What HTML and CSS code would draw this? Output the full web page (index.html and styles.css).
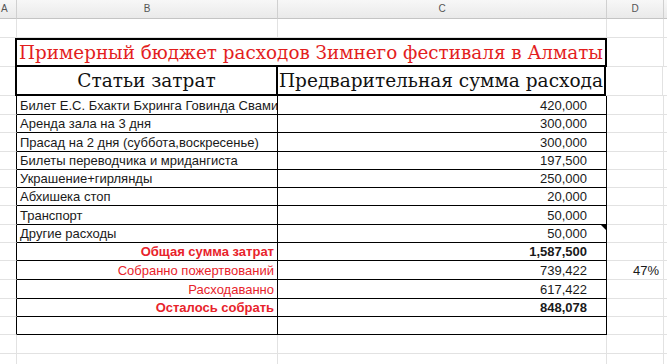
FILE: index.html
```html
<!DOCTYPE html>
<html lang="ru">
<head>
<meta charset="utf-8">
<title>Бюджет</title>
<link rel="stylesheet" href="styles.css">
</head>
<body>
<div class="sheet">
  <div class="row colhdr">
    <div class="cell ca hl">A</div>
    <div class="cell cb">B</div>
    <div class="cell cc">C</div>
    <div class="cell cd">D</div>
    <div class="cell ce"></div>
  </div>
  <div class="row h19">
    <div class="cell ca"></div>
    <div class="cell cb"></div>
    <div class="cell cc"></div>
    <div class="cell cd"></div>
    <div class="cell ce"></div>
  </div>
  <div class="row trow">
    <div class="cell ca2"></div>
    <div class="cell title">Примерный бюджет расходов Зимнего фестиваля в Алматы</div>
    <div class="cell cd"></div>
    <div class="cell ce"></div>
  </div>
  <div class="row hrow">
    <div class="cell ca2"></div>
    <div class="cell hb">Статьи затрат</div>
    <div class="cell hc">Предварительная сумма расхода</div>
    <div class="cell cd"></div>
    <div class="cell ce"></div>
  </div>
  <div class="row h19 t">
    <div class="cell ca"></div><div class="cell cb">Билет Е.С. Бхакти Бхринга Говинда Свами</div><div class="cell cc num">420,000</div><div class="cell cd"></div><div class="cell ce"></div>
  </div>
  <div class="row h18 t">
    <div class="cell ca"></div><div class="cell cb">Аренда зала на 3 дня</div><div class="cell cc num">300,000</div><div class="cell cd"></div><div class="cell ce"></div>
  </div>
  <div class="row h19 t">
    <div class="cell ca"></div><div class="cell cb">Прасад на 2 дня (суббота,воскресенье)</div><div class="cell cc num">300,000</div><div class="cell cd"></div><div class="cell ce"></div>
  </div>
  <div class="row h18 t">
    <div class="cell ca"></div><div class="cell cb">Билеты переводчика и мридангиста</div><div class="cell cc num">197,500</div><div class="cell cd"></div><div class="cell ce"></div>
  </div>
  <div class="row h18 t">
    <div class="cell ca"></div><div class="cell cb">Украшение+гирлянды</div><div class="cell cc num">250,000</div><div class="cell cd"></div><div class="cell ce"></div>
  </div>
  <div class="row h18 t">
    <div class="cell ca"></div><div class="cell cb">Абхишека стоп</div><div class="cell cc num">20,000</div><div class="cell cd"></div><div class="cell ce"></div>
  </div>
  <div class="row h19 t">
    <div class="cell ca"></div><div class="cell cb">Транспорт</div><div class="cell cc num">50,000</div><div class="cell cd"></div><div class="cell ce"></div>
  </div>
  <div class="row h18 t">
    <div class="cell ca"></div><div class="cell cb">Другие расходы</div><div class="cell cc num note">50,000</div><div class="cell cd"></div><div class="cell ce"></div>
  </div>
  <div class="row h18 t">
    <div class="cell ca"></div><div class="cell cb lbl bold">Общая сумма затрат</div><div class="cell cc num bold">1,587,500</div><div class="cell cd"></div><div class="cell ce"></div>
  </div>
  <div class="row h19 t">
    <div class="cell ca"></div><div class="cell cb lbl">Собранно пожертвований</div><div class="cell cc num">739,422</div><div class="cell cd pct">47%</div><div class="cell ce"></div>
  </div>
  <div class="row h19 t">
    <div class="cell ca"></div><div class="cell cb lbl">Расходаванно</div><div class="cell cc num">617,422</div><div class="cell cd"></div><div class="cell ce"></div>
  </div>
  <div class="row h18 t">
    <div class="cell ca"></div><div class="cell cb lbl bold">Осталось собрать</div><div class="cell cc num bold">848,078</div><div class="cell cd"></div><div class="cell ce"></div>
  </div>
  <div class="row h18 t">
    <div class="cell ca"></div><div class="cell cb"></div><div class="cell cc"></div><div class="cell cd"></div><div class="cell ce"></div>
  </div>
  <div class="row h19">
    <div class="cell ca"></div><div class="cell cb"></div><div class="cell cc"></div><div class="cell cd"></div><div class="cell ce"></div>
  </div>
  <div class="row h19">
    <div class="cell ca"></div><div class="cell cb"></div><div class="cell cc"></div><div class="cell cd"></div><div class="cell ce"></div>
  </div>
</div>
</body>
</html>
```
FILE: styles.css
```css
html, body {
  margin: 0;
  padding: 0;
  background: #fff;
}
body {
  font-family: "Liberation Sans", Arial, sans-serif;
  font-size: 13px;
  color: #1a1a1a;
  overflow: hidden;
}
.sheet {
  width: 667px;
}
.row {
  display: flex;
}
.cell {
  box-sizing: border-box;
  flex: none;
  height: 100%;
  overflow: hidden;
  white-space: nowrap;
  border-right: 1px solid #e2e2e2;
  border-bottom: 1px solid #e2e2e2;
}
.ca { width: 17px; }
.ca2 { width: 15px; border-right: 0; }
.cb { width: 261px; }
.cc { width: 329px; }
.cd { width: 57px; }
.ce { flex: 1; border-right: 0; }

.h18 { height: 18px; line-height: 18px; }
.h19 { height: 19px; line-height: 19px; }

/* column header */
.colhdr {
  height: 19px;
  line-height: 18px;
  background: linear-gradient(#f7f7f7, #e9e9e9);
}
.colhdr .cell {
  border-right-color: #d0d0d0;
  border-bottom-color: #c4c4c4;
  text-align: center;
  font-size: 10px;
  color: #555;
}
.colhdr .hl {
  text-align: left;
  padding-left: 1px;
}

/* title row */
.trow {
  height: 29px;
}
.title {
  width: 592px;
  border: 2px solid #000;
  font-family: "DejaVu Serif", "Liberation Serif", serif;
  font-size: 18.35px;
  line-height: 26px;
  color: #e31e1e;
  text-align: center;
}

/* header row */
.hrow {
  height: 29px;
}
.hb, .hc {
  font-family: "DejaVu Serif", "Liberation Serif", serif;
  font-size: 18.5px;
  line-height: 28px;
  color: #111;
  text-align: center;
  border-bottom: 2px solid #000;
}
.hb {
  width: 263px;
  border-left: 2px solid #000;
  border-right: 2px solid #000;
}
.hc {
  width: 328px;
  border-right: 2px solid #000;
}

/* table body */
.t .ca { border-right-color: #000; }
.t .cb, .t .cc {
  border-right-color: #000;
  border-bottom-color: #000;
}
.t .cb { padding-left: 3px; }
.num {
  text-align: right;
  padding-right: 19px;
}
.lbl {
  text-align: right;
  padding-right: 3px;
  color: #e8232b;
}
.bold { font-weight: bold; }
.note { position: relative; }
.note::after {
  content: "";
  position: absolute;
  top: 0;
  right: 0;
  border-top: 5px solid #000;
  border-left: 5px solid transparent;
}
.pct {
  text-align: right;
  padding-right: 4px;
}
```
